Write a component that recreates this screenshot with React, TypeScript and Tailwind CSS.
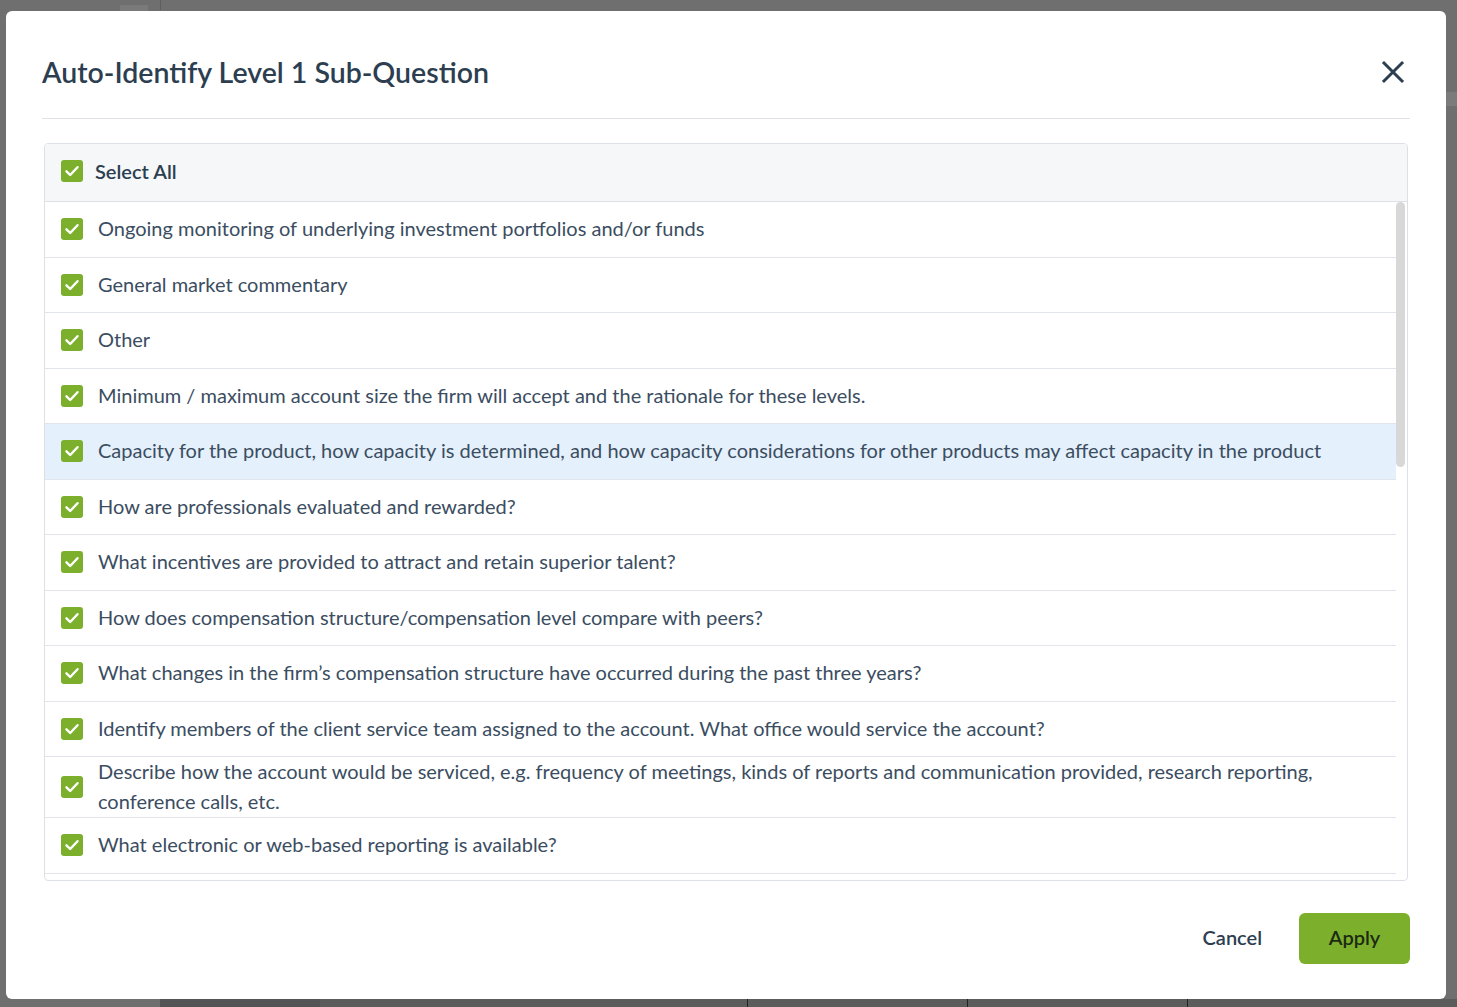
import { useState } from 'react';

const items = [
  'Ongoing monitoring of underlying investment portfolios and/or funds',
  'General market commentary',
  'Other',
  'Minimum / maximum account size the firm will accept and the rationale for these levels.',
  'Capacity for the product, how capacity is determined, and how capacity considerations for other products may affect capacity in the product',
  'How are professionals evaluated and rewarded?',
  'What incentives are provided to attract and retain superior talent?',
  'How does compensation structure/compensation level compare with peers?',
  'What changes in the firm\u2019s compensation structure have occurred during the past three years?',
  'Identify members of the client service team assigned to the account. What office would service the account?',
  'Describe how the account would be serviced, e.g. frequency of meetings, kinds of reports and communication provided, research reporting, conference calls, etc.',
  'What electronic or web-based reporting is available?',
];

const CheckBox = ({ checked }: { checked: boolean }) => (
  <span
    className={`flex h-[22px] w-[22px] shrink-0 items-center justify-center rounded-[3px] ${
      checked ? 'bg-[#7cb02c]' : 'border border-[#c5ccd4] bg-white'
    }`}
  >
    {checked && (
      <svg width="16" height="16" viewBox="0 0 16 16" fill="none">
        <path d="M2.5 8.3l3.7 3.7 7.3-7.8" stroke="white" strokeWidth="2.4" strokeLinecap="round" strokeLinejoin="round" />
      </svg>
    )}
  </span>
);

const App = () => {
  const [checked, setChecked] = useState<boolean[]>(items.map(() => true));
  const allChecked = checked.every(Boolean);

  const toggle = (i: number) => setChecked(checked.map((c, j) => (j === i ? !c : c)));
  const toggleAll = () => setChecked(items.map(() => !allChecked));

  return (
    <div className="relative h-[1007px] w-full overflow-hidden bg-[#6f6f6f] font-['Lato',sans-serif]">
      {/* dimmed page behind the dialog */}
      <div className="absolute left-[120px] top-[5px] h-[10px] w-[28px] bg-[#7a7a7a]" />
      <div className="absolute left-[160px] top-0 h-[10px] w-px bg-[#5e5e5e]" />
      <div className="absolute right-0 top-[92px] h-[14px] w-[12px] bg-[#7b7b7b]" />
      <div className="absolute bottom-0 left-[160px] h-[8px] w-[160px] bg-[#525456]" />
      <div className="absolute bottom-0 left-[320px] right-0 h-[8px] bg-[#5c5c5c]" />
      <div className="absolute bottom-0 left-[747px] h-[8px] w-px bg-[#222]" />
      <div className="absolute bottom-0 left-[967px] h-[8px] w-px bg-[#222]" />
      <div className="absolute bottom-0 left-[1187px] h-[8px] w-px bg-[#222]" />

      {/* dialog */}
      <div className="absolute left-[6px] top-[11px] flex w-[1440px] flex-col rounded-[6px] bg-white">
        <div className="mx-[36px] flex items-center justify-between border-b border-[#dfe2e6] pb-[28px] pt-[43px]">
          <h2 className="text-[28.5px] font-semibold leading-[36px] text-[#2c3e50]">
            Auto-Identify Level 1 Sub-Question
          </h2>
          <button className="mr-[5px] flex h-[24px] w-[24px] items-center justify-center text-[#2c3e50]">
            <svg width="24" height="24" viewBox="0 0 24 24" fill="none">
              <path d="M3 3l18 18M21 3L3 21" stroke="currentColor" strokeWidth="3" strokeLinecap="square" />
            </svg>
          </button>
        </div>

        <div className="mx-[38px] mt-[24px] overflow-hidden rounded-[4px] border border-[#dde1e6]">
          <label
            onClick={toggleAll}
            className="flex h-[58px] cursor-pointer items-center gap-[12px] border-b border-[#dde1e6] bg-[#f5f7f9] pb-[3px] pl-[16px]"
          >
            <CheckBox checked={allChecked} />
            <span className="text-[20px] font-semibold text-[#2c3e50]">Select All</span>
          </label>

          <div className="flex h-[678px]">
            <div className="min-w-0 flex-1 overflow-hidden">
              {items.map((text, i) => (
                <div
                  key={i}
                  onClick={() => toggle(i)}
                  className={`flex min-h-[55.5px] cursor-pointer items-center gap-[15px] border-b border-[#e1e5eb] pl-[16px] pr-[20px] ${
                    i === 4 ? 'bg-[#e4f0fb]' : 'bg-white'
                  }`}
                >
                  <CheckBox checked={checked[i]} />
                  <span className="-translate-y-[1.5px] text-[20px] leading-[30px] text-[#3b4d61]">{text}</span>
                </div>
              ))}
            </div>
            <div className="w-[11px] shrink-0 pr-[2px]">
              <div className="h-[265px] w-[9px] rounded-full bg-[#d8d8d8]" />
            </div>
          </div>
        </div>

        <div className="mx-[36px] flex items-center justify-end gap-[17px] pb-[35px] pt-[32px]">
          <button className="h-[51px] px-[20px] pb-[3px] text-[20px] font-semibold text-[#2c3e50]">Cancel</button>
          <button className="h-[51px] w-[111px] rounded-[6px] bg-[#7cb02c] pb-[3px] text-[20px] font-semibold text-[#1c2a14]">
            Apply
          </button>
        </div>
      </div>
    </div>
  );
};

export default App;
